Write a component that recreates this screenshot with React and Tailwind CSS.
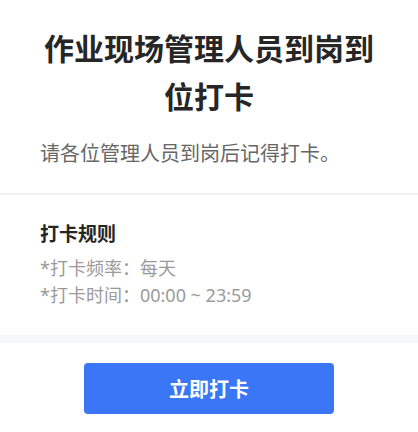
export default function App() {
  return (
    <div className="min-h-screen bg-white font-['Noto_Sans_CJK_SC','Noto_Sans',sans-serif]">
      <div className="border-b-2 border-[#f2f2f2] px-10 pt-[23px] pb-[26px]">
        <h1 className="text-center text-[30px] font-bold leading-[48px] text-[#262626]">
          作业现场管理人员到岗到位打卡
        </h1>
        <p className="mt-5 text-[20px] leading-[28px] text-[#666]">请各位管理人员到岗后记得打卡。</p>
      </div>

      <div className="px-10 pt-[24px] pb-[26px]">
        <h2 className="text-[19px] font-bold leading-[28px] text-[#262626]">打卡规则</h2>
        <div className="mt-[8px] font-['Noto_Sans','Noto_Sans_CJK_SC',sans-serif] text-[18px] leading-[27px] text-[#9a9a9a]">
          <p>*打卡频率：每天</p>
          <p>*打卡时间：00:00 ~ 23:59</p>
        </div>
      </div>

      <div className="h-2 bg-[#f5f6fa]" />

      <div className="flex justify-center pt-5 pb-5">
        <button className="h-[51px] w-[250px] rounded-[4px] bg-[#3a76f5] text-[20px] font-bold text-white">
          立即打卡
        </button>
      </div>
    </div>
  )
}
